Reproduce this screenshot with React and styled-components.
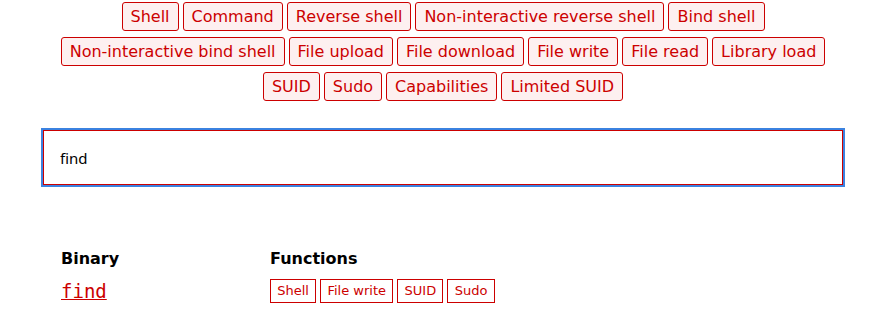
import styled, { createGlobalStyle } from "styled-components";

const GlobalStyle = createGlobalStyle`
  html, body {
    margin: 0;
    padding: 0;
    background: #fff;
    font-family: "DejaVu Sans", sans-serif;
    color: #000;
  }
`;

const Page = styled.div`
  width: 800px;
  margin-left: 43px;
  padding-top: 2px;
`;

const Filters = styled.div`
  display: flex;
  flex-direction: column;
  align-items: center;
  gap: 6px;
`;

const FilterRow = styled.div`
  display: flex;
  justify-content: center;
  gap: 4px;
`;

const FilterButton = styled.button`
  height: 29px;
  padding: 0 8px;
  border: 1px solid #c00;
  border-radius: 3px;
  background: #fdf0f0;
  color: #c00;
  font-family: "DejaVu Sans", sans-serif;
  font-size: 16px;
  line-height: 27px;
  cursor: pointer;
`;

const Search = styled.input`
  display: block;
  box-sizing: border-box;
  width: 800px;
  height: 55px;
  margin-top: 29px;
  padding: 0 16px;
  border: 1px solid #c00;
  outline: 2px solid #3b82e0;
  font-family: "Noto Sans", sans-serif;
  font-size: 15px;
  color: #000;
`;

const Table = styled.div`
  display: grid;
  grid-template-columns: 209px 1fr;
  margin-top: 64px;
  padding-left: 18px;
  row-gap: 10px;
  align-items: center;
`;

const Head = styled.div`
  font-weight: bold;
  font-size: 16px;
  line-height: 20px;
`;

const BinaryLink = styled.a`
  font-family: "DejaVu Sans Mono", monospace;
  font-size: 19px;
  color: #c00;
  text-decoration: underline;
`;

const Tags = styled.div`
  display: flex;
  gap: 4px;
`;

const Tag = styled.span`
  height: 24px;
  box-sizing: border-box;
  padding: 0 6.25px;
  border: 1px solid #c00;
  color: #c00;
  font-size: 13px;
  line-height: 22px;
`;

const rows = [
  ["Shell", "Command", "Reverse shell", "Non-interactive reverse shell", "Bind shell"],
  ["Non-interactive bind shell", "File upload", "File download", "File write", "File read", "Library load"],
  ["SUID", "Sudo", "Capabilities", "Limited SUID"],
];

export default function App() {
  return (
    <>
      <GlobalStyle />
      <Page>
        <Filters>
          {rows.map((row, i) => (
            <FilterRow key={i}>
              {row.map((f) => (
                <FilterButton key={f}>{f}</FilterButton>
              ))}
            </FilterRow>
          ))}
        </Filters>
        <Search defaultValue="find" />
        <Table>
          <Head>Binary</Head>
          <Head>Functions</Head>
          <BinaryLink href="#">find</BinaryLink>
          <Tags>
            {["Shell", "File write", "SUID", "Sudo"].map((t) => (
              <Tag key={t}>{t}</Tag>
            ))}
          </Tags>
        </Table>
      </Page>
    </>
  );
}
